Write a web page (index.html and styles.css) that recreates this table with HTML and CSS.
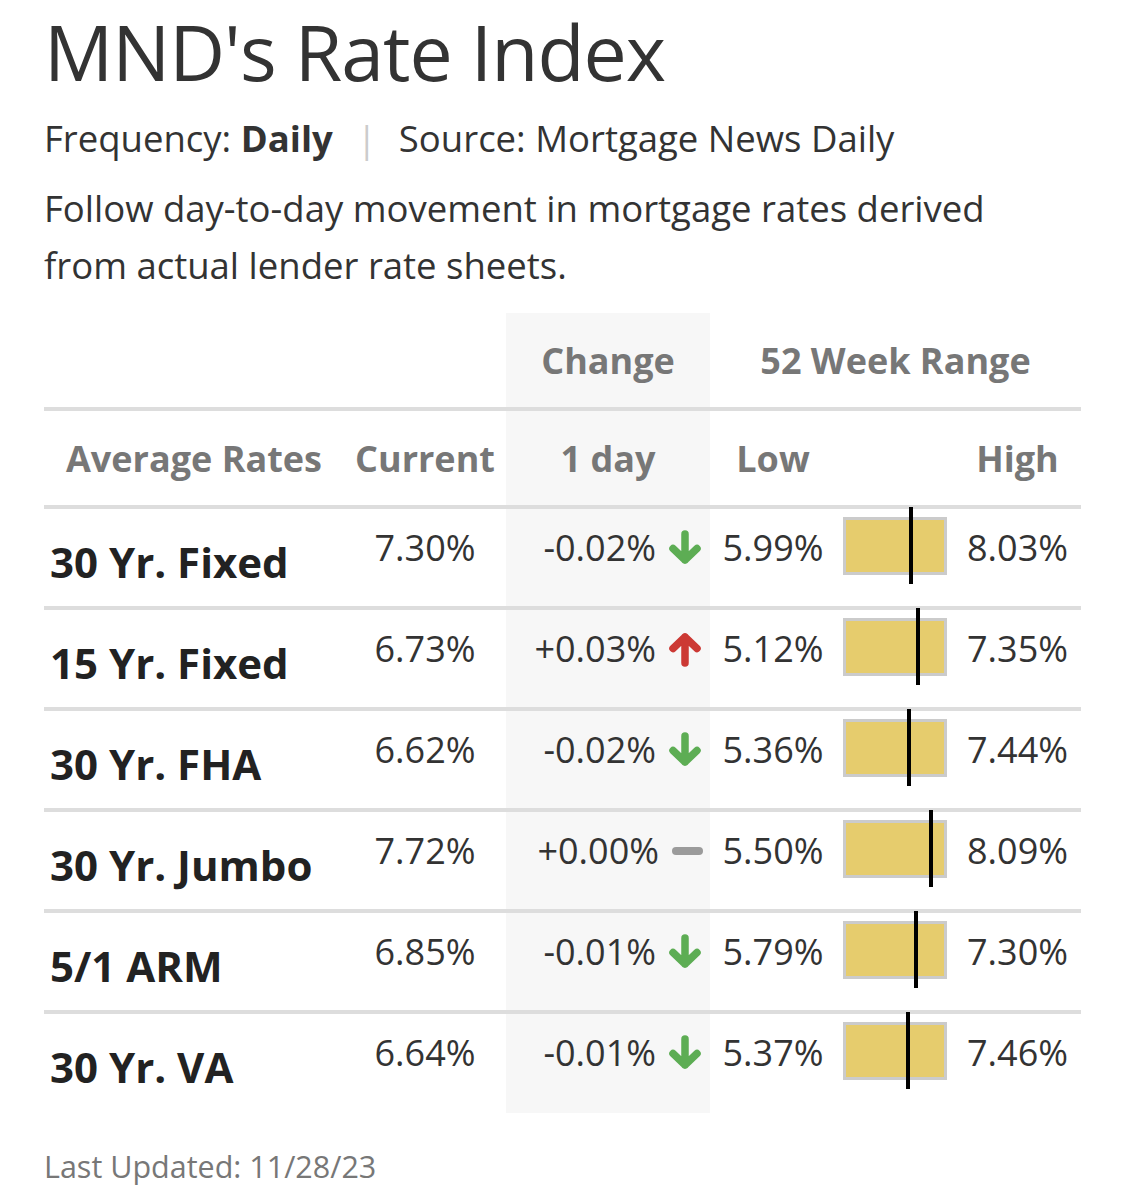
FILE: index.html
```html
<!DOCTYPE html>
<html>
<head>
<meta charset="utf-8">
<title>MND's Rate Index</title>
<link rel="stylesheet" href="styles.css">
</head>
<body>
<div class="page">
  <h1 class="title">MND's Rate Index</h1>
  <div class="meta">Frequency: <b>Daily</b><span class="sep">|</span>Source: Mortgage News Daily</div>
  <p class="desc">Follow day-to-day movement in mortgage rates derived from actual lender rate sheets.</p>

  <table class="rates">
    <colgroup>
      <col class="c-name"><col class="c-cur"><col class="c-chg"><col class="c-low"><col class="c-bar"><col class="c-high">
    </colgroup>
    <thead>
      <tr class="group">
        <th colspan="2"></th>
        <th class="chg">Change</th>
        <th colspan="3">52 Week Range</th>
      </tr>
      <tr class="cols">
        <th>Average Rates</th>
        <th>Current</th>
        <th class="chg">1 day</th>
        <th>Low</th>
        <th></th>
        <th>High</th>
      </tr>
    </thead>
    <tbody>
      <tr>
        <td class="name">30 Yr. Fixed</td>
        <td class="val">7.30%</td>
        <td class="chg"><div class="change"><span>-0.02%</span><svg class="ico down" viewBox="0 0 36 36"><path d="M18 4V30M6 18.5L18 30L30 18.5"/></svg></div></td>
        <td class="val">5.99%</td>
        <td class="bar"><div class="range"><i class="mark" style="left:66%"></i></div></td>
        <td class="val">8.03%</td>
      </tr>
      <tr>
        <td class="name">15 Yr. Fixed</td>
        <td class="val">6.73%</td>
        <td class="chg"><div class="change"><span>+0.03%</span><svg class="ico up" viewBox="0 0 36 36"><path d="M18 32V6M6 17.5L18 6L30 17.5"/></svg></div></td>
        <td class="val">5.12%</td>
        <td class="bar"><div class="range"><i class="mark" style="left:73%"></i></div></td>
        <td class="val">7.35%</td>
      </tr>
      <tr>
        <td class="name">30 Yr. FHA</td>
        <td class="val">6.62%</td>
        <td class="chg"><div class="change"><span>-0.02%</span><svg class="ico down" viewBox="0 0 36 36"><path d="M18 4V30M6 18.5L18 30L30 18.5"/></svg></div></td>
        <td class="val">5.36%</td>
        <td class="bar"><div class="range"><i class="mark" style="left:64%"></i></div></td>
        <td class="val">7.44%</td>
      </tr>
      <tr>
        <td class="name">30 Yr. Jumbo</td>
        <td class="val">7.72%</td>
        <td class="chg"><div class="change"><span>+0.00%</span><span class="flat"></span></div></td>
        <td class="val">5.50%</td>
        <td class="bar"><div class="range"><i class="mark" style="left:87%"></i></div></td>
        <td class="val">8.09%</td>
      </tr>
      <tr>
        <td class="name">5/1 ARM</td>
        <td class="val">6.85%</td>
        <td class="chg"><div class="change"><span>-0.01%</span><svg class="ico down" viewBox="0 0 36 36"><path d="M18 4V30M6 18.5L18 30L30 18.5"/></svg></div></td>
        <td class="val">5.79%</td>
        <td class="bar"><div class="range"><i class="mark" style="left:71%"></i></div></td>
        <td class="val">7.30%</td>
      </tr>
      <tr class="last">
        <td class="name">30 Yr. VA</td>
        <td class="val">6.64%</td>
        <td class="chg"><div class="change"><span>-0.01%</span><svg class="ico down" viewBox="0 0 36 36"><path d="M18 4V30M6 18.5L18 30L30 18.5"/></svg></div></td>
        <td class="val">5.37%</td>
        <td class="bar"><div class="range"><i class="mark" style="left:63%"></i></div></td>
        <td class="val">7.46%</td>
      </tr>
    </tbody>
  </table>

  <div class="updated">Last Updated: 11/28/23</div>
</div>
</body>
</html>
```

FILE: styles.css
```css
* { box-sizing: border-box; }
html, body { margin: 0; padding: 0; background: #fff; }
body {
  font-family: "Open Sans", "Noto Sans", sans-serif;
  color: #333;
}
.page {
  padding: 0 0 0 44px;
}
.title {
  margin: 0;
  padding-top: 5px;
  font-size: 77px;
  font-weight: 400;
  line-height: 94px;
  letter-spacing: -1px;
  color: #333;
}
.meta {
  margin-top: 15px;
  font-size: 36.5px;
  line-height: 48px;
  color: #333;
}
.meta b { font-weight: 700; }
.sep {
  display: inline-block;
  margin: 0 22px 0 24px;
  color: #ccc;
}
.desc {
  margin: 18px 0 0;
  font-size: 36.5px;
  line-height: 57px;
  color: #333;
  max-width: 990px;
}
.rates {
  margin-top: 19px;
  border-collapse: separate;
  border-spacing: 0;
  table-layout: fixed;
  width: 1037px;
}
.c-name { width: 300px; }
.c-cur { width: 162px; }
.c-chg { width: 204px; }
.c-low { width: 126px; }
.c-bar { width: 118px; }
.c-high { width: 127px; }

.rates th {
  padding: 0;
  height: 98px;
  font-size: 36px;
  font-weight: 700;
  color: #777;
  text-align: center;
  vertical-align: middle;
  border-bottom: 4px solid #ddd;
}
.rates .chg { background: #f7f7f7; }
.rates td {
  padding: 0;
  height: 101px;
  vertical-align: top;
  border-bottom: 4px solid #ddd;
}
.rates tr.last td { border-bottom: none; height: 99px; }
.name {
  padding-top: 28px !important;
  padding-left: 6px !important;
  font-size: 42px;
  font-weight: 700;
  line-height: 50px;
  color: #222;
}
.val {
  padding-top: 18px !important;
  font-size: 36px;
  line-height: 42px;
  text-align: center;
  color: #333;
}
.change {
  display: flex;
  justify-content: flex-end;
  align-items: center;
  gap: 11px;
  padding: 18px 7px 0 0;
  font-size: 36px;
  line-height: 42px;
  color: #333;
}
.ico {
  width: 36px;
  height: 36px;
  fill: none;
  stroke-width: 7.5;
  stroke-linecap: round;
  stroke-linejoin: round;
}
.ico.down { stroke: #5dad54; }
.ico.up { stroke: #cc3934; }
.flat {
  display: block;
  width: 31px;
  height: 8px;
  border-radius: 4px;
  background: #9b9b9b;
  margin-left: 2px;
}
.bar { padding-top: 8px !important; }
.range {
  position: relative;
  width: 104px;
  height: 58px;
  margin: 0 auto;
  background: #e6cc6d;
  border: 3px solid #cbcbcb;
}
.mark {
  position: absolute;
  top: -13px;
  bottom: -12px;
  width: 4px;
  margin-left: -2px;
  background: #000;
}
.updated {
  margin-top: 33px;
  font-size: 30.5px;
  line-height: 40px;
  color: #777;
}
```
